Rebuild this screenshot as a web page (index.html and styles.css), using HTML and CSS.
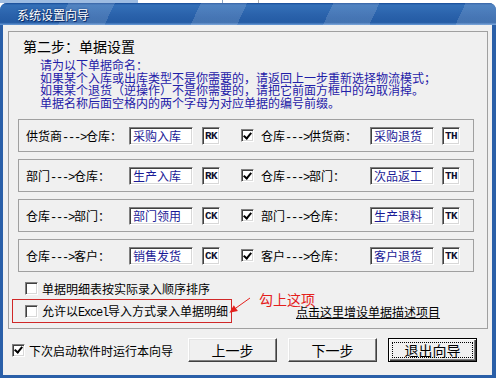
FILE: index.html
```html
<!DOCTYPE html>
<html lang="zh-CN">
<head>
  <meta charset="UTF-8">
  <title>系统设置向导</title>
  <link rel="stylesheet" href="styles.css">
</head>
<body>
  <div class="desk"></div>
  <div class="window">
    <div class="titlebar">系统设置向导</div>
    <div class="client">
      <div class="group">
        <div class="step">第二步：单据设置</div>
        <div class="note">
          <div>请为以下单据命名：</div>
          <div>如果某个入库或出库类型不是你需要的，请返回上一步重新选择物流模式；</div>
          <div>如果某个退货（逆操作）不是你需要的，请把它前面方框中的勾取消掉。</div>
          <div>单据名称后面空格内的两个字母为对应单据的编号前缀。</div>
        </div>

        <div class="rows">
          <div class="row">
            <span class="lbl">供货商<span class="asc">---&gt;</span>仓库：</span>
            <span class="field name">采购入库</span>
            <span class="field code">RK</span>
            <span class="cb on"></span>
            <span class="lbl lbl2">仓库<span class="asc">---&gt;</span>供货商：</span>
            <span class="field name">采购退货</span>
            <span class="field code code2">TH</span>
          </div>
          <div class="row">
            <span class="lbl">部门<span class="asc">---&gt;</span>仓库：</span>
            <span class="field name">生产入库</span>
            <span class="field code">RK</span>
            <span class="cb on"></span>
            <span class="lbl lbl2">仓库<span class="asc">---&gt;</span>部门：</span>
            <span class="field name">次品返工</span>
            <span class="field code code2">TH</span>
          </div>
          <div class="row">
            <span class="lbl">仓库<span class="asc">---&gt;</span>部门：</span>
            <span class="field name">部门领用</span>
            <span class="field code">CK</span>
            <span class="cb on"></span>
            <span class="lbl lbl2">部门<span class="asc">---&gt;</span>仓库：</span>
            <span class="field name">生产退料</span>
            <span class="field code code2">TK</span>
          </div>
          <div class="row">
            <span class="lbl">仓库<span class="asc">---&gt;</span>客户：</span>
            <span class="field name">销售发货</span>
            <span class="field code">CK</span>
            <span class="cb on"></span>
            <span class="lbl lbl2">客户<span class="asc">---&gt;</span>仓库：</span>
            <span class="field name">客户退货</span>
            <span class="field code code2">TK</span>
          </div>
        </div>

        <div class="opt opt-sort"><span class="cb"></span><span>单据明细表按实际录入顺序排序</span></div>
        <div class="excel-row">
          <div class="opt redbox"><span class="cb"></span><span>允许以<span class="asc">Excel</span>导入方式录入单据明细</span></div>
          <span class="link">点击这里增设单据描述项目</span>
        </div>

        <!-- annotation drawn over the dialog -->
        <svg class="arrow" width="30" height="24" viewBox="0 0 30 24">
          <line x1="25" y1="4" x2="10.8" y2="14.1" stroke="#e4201c" stroke-width="1"/>
          <polygon points="4.3,18.7 12.9,17 8.8,11.2" fill="#e4201c"/>
        </svg>
        <span class="hint">勾上这项</span>
      </div>

      <div class="bottom">
        <div class="opt keep"><span class="cb on"></span><span>下次启动软件时运行本向导</span></div>
        <div class="btns">
          <button class="btn">上一步</button>
          <button class="btn">下一步</button>
          <button class="btn default">退出向导</button>
        </div>
      </div>
    </div>
  </div>
</body>
</html>
```

FILE: styles.css
```css
* { box-sizing: border-box; }
body {
  margin: 0;
  width: 496px;
  height: 378px;
  overflow: hidden;
  font-family: "Noto Sans CJK SC", "Liberation Sans", sans-serif;
  font-size: 12px;
  color: #000;
  background: #fff;
}
.desk {
  height: 3px;
  background: linear-gradient(to right, #9dbce2 0 138px, #fff 138px 222px, #8aa4c4 222px 223px, #fff 223px 258px, #b0b0b0 258px 259px, #fff 259px);
}
.window {
  height: 375px;
  display: flex;
  flex-direction: column;
  background: #2a5fa8;
  border-radius: 7px 7px 0 0;
  overflow: hidden;
  padding-bottom: 3px;
}
.titlebar {
  height: 22px;
  flex: none;
  padding-left: 17px;
  line-height: 23px;
  font-size: 12px;
  color: #fff;
  text-shadow: 1px 1px 0 #0b2a66, 0 0 2px #0b2a66;
  background:
    repeating-linear-gradient(115deg, rgba(255,255,255,0) 0 62px, rgba(255,255,255,.14) 62px 104px, rgba(255,255,255,0) 104px 120px),
    linear-gradient(to bottom, #174a96 0, #3470b8 2px, #2a62ab 55%, #245ba4 88%, #6a9cd8 100%);
}
.client {
  flex: 1;
  margin: 0 4px 0 3px;
  background: #f0f0f0;
}

/* group box */
.group {
  position: relative;
  margin: 6px 0 0 5px;
  width: 480px;
  height: 298px;
  border: 1px solid #a0a0a0;
}
.step {
  margin: 6px 0 0 14px;
  font-size: 14px;
  line-height: 16px;
}
.note {
  margin: 5px 0 0 31px;
  line-height: 12.5px;
  color: #1f20a8;
}
.rows {
  margin: 10px 0 0 9px;
  width: 456px;
  display: flex;
  flex-direction: column;
  gap: 7px;
}
.row {
  height: 33px;
  border: 1px solid #a0a0a0;
  display: flex;
  align-items: center;
  padding-left: 7px;
}
.lbl {
  width: 103px;
  white-space: nowrap;
}
.lbl2 {
  width: 109px;
  margin-left: 7px;
}
.asc {
  font-family: "Liberation Mono", monospace;
  font-size: 12px;
  letter-spacing: -1.2px;
}
.field {
  height: 18px;
  flex: none;
  display: inline-flex;
  align-items: center;
  padding-left: 3px;
  border: 1px solid;
  border-color: #808080 #fff #fff #808080;
  box-shadow: inset 1px 1px 0 #404040, inset -1px -1px 0 #d8d8d8;
  background: #fff;
  white-space: nowrap;
  overflow: hidden;
}
.name {
  width: 64px;
  color: #1a1a96;
}
.code {
  width: 18px;
  margin-left: 9px;
  padding-left: 2px;
  font-family: "Liberation Mono", monospace;
  font-size: 11px;
  font-weight: bold;
  letter-spacing: -0.7px;
  color: #101030;
}
.code2 { margin-left: 8px; }

/* checkboxes */
.cb {
  width: 13px;
  height: 13px;
  flex: none;
  display: inline-flex;
  align-items: center;
  justify-content: center;
  background: #fff;
  border: 1px solid;
  border-color: #808080 #fff #fff #808080;
  box-shadow: inset 1px 1px 0 #404040, inset -1px -1px 0 #d8d8d8;
}
.row .cb { margin-left: 21px; }
.cb.on::after {
  content: "";
  width: 3px;
  height: 6px;
  margin-top: -2px;
  border: solid #000;
  border-width: 0 2px 2px 0;
  transform: rotate(40deg);
}
.opt {
  display: flex;
  align-items: center;
  gap: 4px;
  white-space: nowrap;
}
.opt-sort {
  height: 16px;
  margin: 8px 0 0 16px;
}
.excel-row {
  display: flex;
  align-items: center;
  margin-top: 3px;
}
.redbox {
  margin-left: 3px;
  width: 220px;
  height: 24px;
  padding-left: 12px;
  border: 1px solid #d02828;
}
.link {
  margin-left: 64px;
  text-decoration: underline;
}
.hint {
  position: absolute;
  left: 250px;
  top: 259px;
  font-size: 14px;
  line-height: 16px;
  color: #e4201c;
}
.arrow {
  position: absolute;
  left: 216px;
  top: 262px;
}

/* bottom bar */
.bottom {
  height: 46px;
  display: flex;
  align-items: flex-start;
  padding: 9px 15px 0 9px;
}
.keep { height: 24px; }
.btns {
  margin-left: auto;
  display: flex;
  gap: 11px;
}
.btn {
  position: relative;
  width: 89px;
  height: 24px;
  padding: 0;
  background: #f0f0f0;
  border: 1px solid;
  border-color: #fff #404040 #404040 #fff;
  box-shadow: inset -1px -1px 0 #808080, inset 1px 1px 0 #e4e4e4;
  font-family: "Noto Sans CJK SC", sans-serif;
  font-size: 14px;
  color: #000;
}
.btn.default {
  border: 1px solid #000;
  box-shadow: inset 1px 1px 0 #fff, inset -1px -1px 0 #404040, inset -2px -2px 0 #808080;
}
.btn.default::after {
  content: "";
  position: absolute;
  inset: 3px;
  border: 1px dotted #000;
}
```
